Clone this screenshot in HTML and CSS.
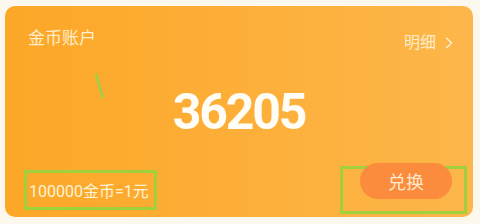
FILE: index.html
```html
<!DOCTYPE html>
<html lang="zh">
    <head>
        <meta charset="UTF-8">
        <meta name="viewport" content="width=device-width, initial-scale=1.0">
        <title>金币账户</title>
        <link rel="stylesheet" href="styles.css">
    </head>
    <body>

        <!-- Coin account card -->
        <div class="card">
            <div class="card-head">
                <span class="card-title">金币账户</span>
                <span class="detail">明细
                    <svg class="arrow" width="8" height="12" viewBox="0 0 8 12"><path d="M1.5 1 L6.5 6 L1.5 11" fill="none" stroke="currentColor" stroke-width="1.6"/></svg>
                </span>
            </div>

            <div class="amount">36205</div>

            <div class="card-foot">
                <div class="mark-box rate-box">
                    <span class="rate">100000金币=1元</span>
                </div>
                <div class="mark-box btn-box">
                    <button class="exchange">兑换</button>
                </div>
            </div>

            <!-- annotation stroke -->
            <span class="mark-line"></span>
        </div>

    </body>
</html>
```

FILE: styles.css
```css
/* CSS */
body {
    margin: 0;
    background-color: #fcf8ee;
    font-family: Roboto, "Noto Sans CJK SC", sans-serif;
}
.card {
    position: relative;
    display: flex;
    flex-direction: column;
    height: 211px;
    margin: 6px 7px 7px 5px;
    border-radius: 10px;
    background: linear-gradient(90deg, #fca727, #fdb64a);
    color: #fff6de;
}
.card-head {
    display: flex;
    justify-content: space-between;
    align-items: flex-start;
    padding: 21px 20px 0 23px;
}
.card-title {
    font-size: 17px;
    line-height: 22px;
    color: rgba(255, 246, 222, 0.92);
}
.detail {
    display: flex;
    align-items: center;
    gap: 9px;
    margin-top: 6px;
    font-size: 16px;
    line-height: 20px;
    color: rgba(255, 246, 222, 0.88);
}
.amount {
    margin-top: 31px;
    text-align: center;
    font-size: 50px;
    font-weight: bold;
    line-height: 56px;
    letter-spacing: -2.2px;
    color: #fffdf6;
}
.card-foot {
    display: flex;
    justify-content: space-between;
    align-items: flex-end;
    margin-top: auto;
    padding: 0 6px 3px 19px;
}
.mark-box {
    box-sizing: border-box;
    border: 3px solid #a0d03c;
    display: flex;
}
.rate-box {
    width: 133px;
    height: 40px;
    margin-bottom: 4px;
    align-items: center;
    padding-left: 2px;
}
.rate {
    font-size: 16px;
    color: #fff3d6;
    white-space: nowrap;
}
.btn-box {
    width: 127px;
    height: 48px;
    padding-left: 17px;
}
.exchange {
    width: 92px;
    height: 36px;
    margin-top: -6px;
    border: none;
    border-radius: 18px;
    background-color: #fb8b3d;
    color: #fde8cc;
    font-family: "Noto Sans CJK SC", sans-serif;
    font-size: 18px;
    cursor: pointer;
}
.mark-line {
    position: absolute;
    left: 93px;
    top: 67px;
    width: 3px;
    height: 26px;
    border-radius: 2px;
    background-color: #9ccf44;
    transform: rotate(-16deg);
    opacity: 0.85;
}
```
